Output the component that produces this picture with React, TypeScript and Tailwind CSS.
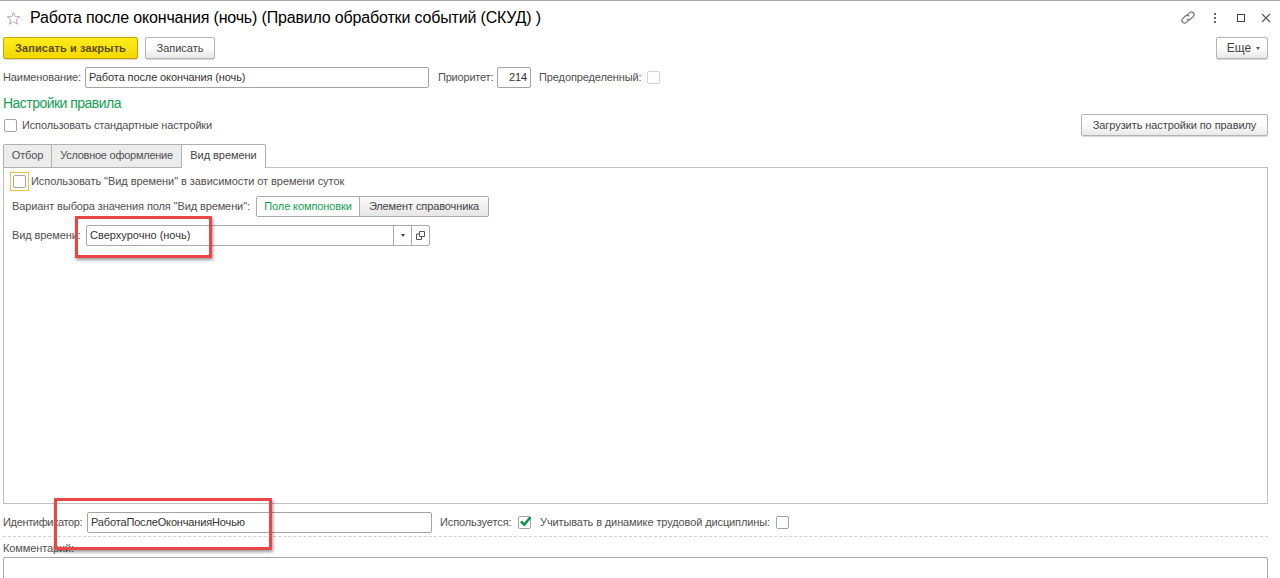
import { useState } from "react";
import type { ReactNode } from "react";

const buttonBase =
  "flex h-[22px] items-center justify-center rounded-[2px] border shadow-[0_1px_0_rgba(0,0,0,0.15)] whitespace-nowrap";

const tabs = [
  { id: "filter", label: "Отбор", className: "w-[49px] tracking-[-0.15px]" },
  { id: "format", label: "Условное оформление", className: "w-[130px] tracking-[-0.25px]" },
  { id: "time", label: "Вид времени", className: "w-[84px] tracking-[-0.05px]" },
];

function GreyButton({ className, children }: { className: string; children: ReactNode }) {
  return (
    <button
      type="button"
      className={`${buttonBase} border-[#b3b3b3] bg-gradient-to-b from-white via-[#fcfcfc] to-[#e9e9e9] text-[#444] ${className}`}
    >
      {children}
    </button>
  );
}

function CheckBox({ checked = false, faded = false }: { checked?: boolean; faded?: boolean }) {
  const [on, setOn] = useState(checked);
  return (
    <button
      type="button"
      role="checkbox"
      aria-checked={on}
      disabled={faded}
      onClick={() => setOn(!on)}
      className={`relative size-[13px] shrink-0 rounded-[2px] border bg-white ${faded ? "border-[#d2d2d2]" : "border-[#a3a3a3]"}`}
    >
      {on && (
        <svg viewBox="0 0 14 14" className="absolute -top-[2px] -left-px size-[14px]">
          <path d="M3 6.5 6.3 9.7 12.4 2.2" fill="none" stroke="#079447" strokeWidth="2.5" />
        </svg>
      )}
    </button>
  );
}

function Label({ className = "", children }: { className?: string; children: ReactNode }) {
  return <span className={`pb-px whitespace-nowrap ${className}`}>{children}</span>;
}

function TextField({ value, className }: { value: string; className: string }) {
  return (
    <input
      type="text"
      defaultValue={value}
      className={`h-[21px] rounded-[2px] border border-[#a3a3a3] bg-white px-[3px] pb-px text-[#333] outline-none ${className}`}
    />
  );
}

function WindowIcons() {
  return (
    <div className="flex h-[15px] items-center text-[#555]">
      <svg viewBox="0 0 16 16" className="mr-[13px] size-[16px]" fill="none" stroke="#777" strokeWidth="1.2" strokeLinecap="round">
        <path d="M6.6 5.7 9.5 2.8a2.6 2.6 0 0 1 3.8 3.6L10.6 9a2.5 2.5 0 0 1-3.5.1" />
        <path d="M9.3 9.5 6.5 12.3a2.6 2.6 0 0 1-3.8-3.6L5.4 6a2.5 2.5 0 0 1 3.5-.1" />
      </svg>
      <svg viewBox="0 0 12 12" className="mr-[15px] size-[12px]" fill="#666">
        <path d="M5 1h2v2H5zM5 5h2v2H5zM5 9h2v2H5z" />
      </svg>
      <svg viewBox="0 0 10 10" className="mr-[15px] size-[10px]" fill="none" stroke="#444" strokeWidth="1.1">
        <path d="M1.5 1.5h7v7h-7z" />
      </svg>
      <svg viewBox="0 0 10 10" className="size-[10px]" fill="none" stroke="#555" strokeWidth="1.1">
        <path d="m1 1 8 8M9 1 1 9" />
      </svg>
    </div>
  );
}

export default function App() {
  const [tab, setTab] = useState("time");

  return (
    <div className="relative flex h-[578px] w-[1280px] flex-col overflow-hidden border-t border-[#a9a9a9] bg-white font-['Liberation_Sans',Arial,sans-serif] text-[11px] leading-[14px] tracking-[-0.11px] text-[#505050] *:shrink-0">
      {/* Title bar */}
      <header className="flex h-[36px] items-center justify-between pr-[9px] pb-[2px] pl-[6px]">
        <div className="flex items-center">
          <svg viewBox="0 0 16 16" className="mr-[9px] size-[15px]" fill="none" stroke="#aaa" strokeWidth="1">
            <path d="m8 1.2 1.8 4.7 5 .2-3.9 3.1 1.4 4.9L8 11.3l-4.3 2.8 1.4-4.9L1.2 6.1l5-.2z" />
          </svg>
          <h1 className="text-[16px] leading-[20px] tracking-[-0.17px] whitespace-nowrap text-black">
            Работа после окончания (ночь) (Правило обработки событий (СКУД) )
          </h1>
        </div>
        <WindowIcons />
      </header>

      {/* Commands */}
      <div className="flex h-[22px] items-center pr-[12px] pl-[3px]">
        <button
          type="button"
          className={`${buttonBase} mr-[7px] w-[135px] border-[#c5a500] bg-gradient-to-b from-[#ffec1c] to-[#f3d800] font-bold tracking-[0.11px] text-[#5c4d00]`}
        >
          Записать и закрыть
        </button>
        <GreyButton className="w-[70px] tracking-[0px]">Записать</GreyButton>
        <GreyButton className="ml-auto w-[52px]">
          <span className="ml-[3px] text-[12px] tracking-normal">Еще</span>
          <span className="mt-px ml-[5px] border-x-[2.5px] border-t-[3px] border-x-transparent border-t-[#555]" />
        </GreyButton>
      </div>

      <div className="mt-[8px] flex h-[21px] items-center pl-[3px]">
        <Label className="w-[82px]">Наименование:</Label>
        <TextField value="Работа после окончания (ночь)" className="w-[344px]" />
        <Label className="ml-[9px] w-[59px] tracking-[-0.2px]">Приоритет:</Label>
        <TextField value="214" className="w-[34px] text-right" />
        <Label className="ml-[8px] w-[108px]">Предопределенный:</Label>
        <CheckBox faded />
      </div>

      <h2 className="mt-[7px] pl-[3px] text-[14px] leading-[16px] tracking-[-0.53px] text-[#14a051]">
        Настройки правила
      </h2>

      <div className="mt-[3px] flex h-[22px] items-center pr-[12px] pl-[4px]">
        <CheckBox />
        <span className="ml-[5px] tracking-[-0.15px]">Использовать стандартные настройки</span>
        <GreyButton className="ml-auto w-[187px] tracking-[-0.07px]">Загрузить настройки по правилу</GreyButton>
      </div>

      {/* Tabs */}
      <div className="z-10 mt-[8px] -mb-px flex h-[24px] pl-[3px]">
        {tabs.map((t) => (
          <button
            key={t.id}
            type="button"
            onClick={() => setTab(t.id)}
            className={`border-t border-r border-[#b0b0b0] whitespace-nowrap first:rounded-tl-[2px] first:border-l last:rounded-tr-[2px] ${t.className} ${
              tab === t.id ? "bg-white pb-[3px] text-[#444]" : "border-b bg-[#ececec] pb-[2px]"
            }`}
          >
            {t.label}
          </button>
        ))}
      </div>

      <section className="mr-[12px] ml-[3px] h-[337px] border border-[#c0c0c0] px-[6px] pt-[4px]">
        <div className="flex items-center">
          <span className="flex size-[19px] items-center justify-center border border-[#edc53c]">
            <CheckBox />
          </span>
          <Label className="ml-[2px] tracking-[-0.06px]">
            Использовать "Вид времени" в зависимости от времени суток
          </Label>
        </div>

        <div className="mt-[5px] flex h-[21px] items-center pl-[2px]">
          <Label className="w-[244px]">Вариант выбора значения поля "Вид времени":</Label>
          <div className="flex h-[21px] w-[233px] overflow-hidden rounded-[2px] border border-[#aaa]">
            <button type="button" className="w-[102px] bg-white pb-px text-[#14a051]">
              Поле компоновки
            </button>
            <button
              type="button"
              className="flex-1 border-l border-[#aaa] bg-gradient-to-b from-[#fbfbfb] to-[#e6e6e6] pb-px text-[#444]"
            >
              Элемент справочника
            </button>
          </div>
        </div>

        <div className="mt-[8px] flex h-[21px] items-center pl-[2px]">
          <Label className="w-[74px]">Вид времени:</Label>
          <div className="flex h-[21px] w-[344px] overflow-hidden rounded-[2px] border border-[#aaa]">
            <input
              type="text"
              defaultValue="Сверхурочно (ночь)"
              className="min-w-0 flex-1 px-[3px] pb-px tracking-normal text-[#333] outline-none"
            />
            <button type="button" className="flex w-[18px] items-center justify-center border-l border-[#aaa]">
              <span className="border-x-[2.5px] border-t-[3px] border-x-transparent border-t-[#444]" />
            </button>
            <button type="button" className="flex w-[18px] items-center justify-center border-l border-[#aaa]">
              <svg viewBox="0 0 9 9" className="size-[9px]" fill="none" stroke="#555" strokeWidth="1">
                <path d="M3.5.5h5v5h-5zM3.5 3h-3v5.5h5v-3" />
              </svg>
            </button>
          </div>
        </div>
      </section>

      {/* Footer fields */}
      <div className="mt-[8px] flex h-[21px] items-center pl-[3px]">
        <Label className="w-[84px] tracking-[-0.34px]">Идентификатор:</Label>
        <TextField value="РаботаПослеОкончанияНочью" className="w-[345px] tracking-[-0.15px]" />
        <Label className="ml-[8px] w-[78px]">Используется:</Label>
        <CheckBox checked />
        <Label className="ml-[9px] w-[236px]">Учитывать в динамике трудовой дисциплины:</Label>
        <CheckBox />
      </div>

      <div className="mt-[3px] mr-[12px] ml-[3px] border-t border-dashed border-[#d0d0d0]" />
      <span className="mt-[4px] pl-[3px]">Комментарий:</span>
      <textarea className="mt-[2px] mr-[12px] ml-[3px] h-[60px] resize-none rounded-[2px] border border-[#aaa] outline-none" />

      {/* Callout frames laid over the form */}
      <div className="pointer-events-none absolute top-[215px] left-[75px] z-20 h-[42px] w-[137px] border-[3px] border-[#e94747] shadow-[1px_2px_3px_rgba(0,0,0,0.4)]" />
      <div className="pointer-events-none absolute top-[497px] left-[54px] z-20 h-[52px] w-[218px] border-[3px] border-[#e94747] shadow-[1px_2px_3px_rgba(0,0,0,0.4)]" />
    </div>
  );
}
